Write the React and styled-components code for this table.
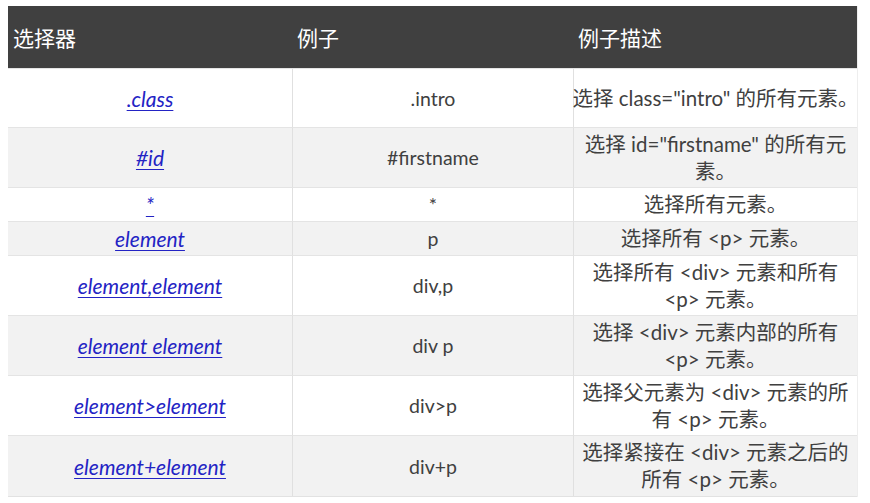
import React from 'react';
import styled, { createGlobalStyle } from 'styled-components';

const GlobalStyle = createGlobalStyle`
  body {
    margin: 0;
    background: #ffffff;
    font-family: Lato, "Noto Sans CJK SC", sans-serif;
  }
`;

const Page = styled.div`
  padding: 6px 13px 0 8px;
`;

const Table = styled.div`
  display: grid;
  grid-template-columns: 284px 281px 284px;
  width: 849px;
  border-bottom: 1px solid #e2e2e2;
  box-shadow: 1px 0 0 #eeeeee;
`;

const HeadCell = styled.div`
  height: 62px;
  background: #404040;
  color: #ffffff;
  font-size: 21px;
  display: flex;
  align-items: center;
  padding-left: ${p => p.$pad}px;
  box-sizing: border-box;
`;

const Cell = styled.div`
  height: ${p => p.$h}px;
  background: ${p => (p.$alt ? '#f2f2f2' : '#ffffff')};
  border-top: 1px solid #e4e4e4;
  border-left: ${p => (p.$first ? 'none' : '1px solid #e0e0e0')};
  box-sizing: border-box;
  display: flex;
  flex-direction: column;
  align-items: center;
  justify-content: center;
  text-align: center;
  color: #404040;
  font-size: ${p => p.$size || 19.5}px;
  line-height: 27px;
`;

const Link = styled.a`
  color: #2323c4;
  font-style: italic;
  font-size: 21px;
  text-decoration: underline;
  text-underline-offset: 3px;
  text-decoration-thickness: 1px;
`;

const Line = styled.span`
  white-space: nowrap;
`;

const rows = [
  { sel: '.class', ex: '.intro', desc: ['选择 class="intro" 的所有元素。'], h: 59 },
  { sel: '#id', ex: '#firstname', desc: ['选择 id="firstname" 的所有元', '素。'], h: 60 },
  { sel: '*', ex: '*', desc: ['选择所有元素。'], h: 34 },
  { sel: 'element', ex: 'p', desc: ['选择所有 <p> 元素。'], h: 34 },
  { sel: 'element,element', ex: 'div,p', desc: ['选择所有 <div> 元素和所有', '<p> 元素。'], h: 60 },
  { sel: 'element element', ex: 'div p', desc: ['选择 <div> 元素内部的所有', '<p> 元素。'], h: 60 },
  { sel: 'element>element', ex: 'div>p', desc: ['选择父元素为 <div> 元素的所', '有 <p> 元素。'], h: 60 },
  { sel: 'element+element', ex: 'div+p', desc: ['选择紧接在 <div> 元素之后的', '所有 <p> 元素。'], h: 61 },
];

export default function App() {
  return (
    <Page>
      <GlobalStyle />
      <Table>
        <HeadCell $pad={5}>选择器</HeadCell>
        <HeadCell $pad={5}>例子</HeadCell>
        <HeadCell $pad={5}>例子描述</HeadCell>
        {rows.map((r, i) => (
          <React.Fragment key={r.sel}>
            <Cell $h={r.h} $alt={i % 2 === 1} $first>
              <Link href="#">{r.sel}</Link>
            </Cell>
            <Cell $h={r.h} $alt={i % 2 === 1}>{r.ex}</Cell>
            <Cell $h={r.h} $alt={i % 2 === 1} $size={20.5}>
              {r.desc.map(line => (
                <Line key={line}>{line}</Line>
              ))}
            </Cell>
          </React.Fragment>
        ))}
      </Table>
    </Page>
  );
}
